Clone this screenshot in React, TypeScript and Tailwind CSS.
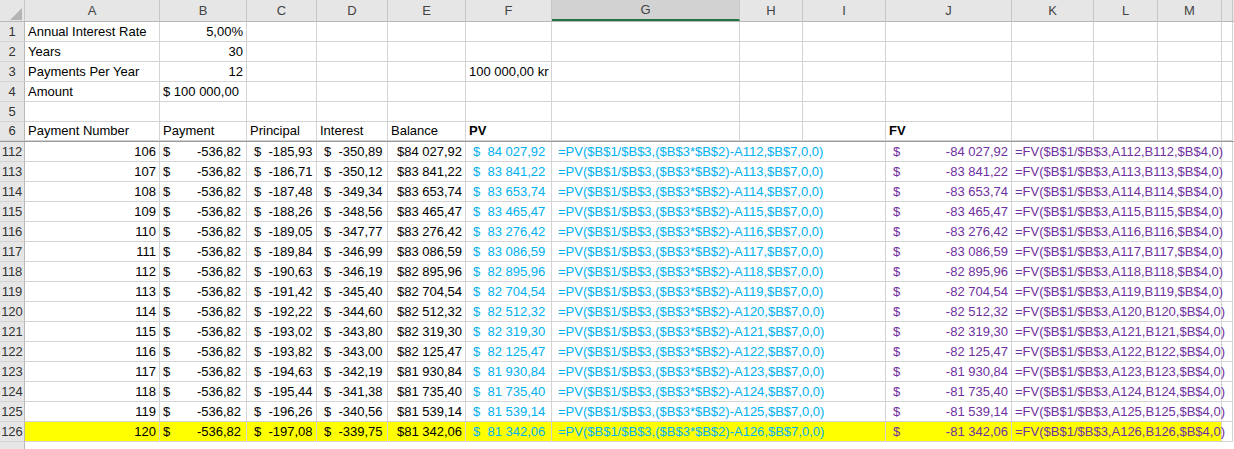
import React from "react";

const W = [25, 135, 87, 70, 71, 78, 86, 188, 63, 83, 126, 82, 64, 64, 11];
const COLS = ["", "A", "B", "C", "D", "E", "F", "G", "H", "I", "J", "K", "L", "M", ""];
const prin = ["-185,93","-186,71","-187,48","-188,26","-189,05","-189,84","-190,63","-191,42","-192,22","-193,02","-193,82","-194,63","-195,44","-196,26","-197,08"];
const intr = ["-350,89","-350,12","-349,34","-348,56","-347,77","-346,99","-346,19","-345,40","-344,60","-343,80","-343,00","-342,19","-341,38","-340,56","-339,75"];
const bal = ["84 027,92","83 841,22","83 653,74","83 465,47","83 276,42","83 086,59","82 895,96","82 704,54","82 512,32","82 319,30","82 125,47","81 930,84","81 735,40","81 539,14","81 342,06"];

const cell = "h-full shrink-0 border-r border-b border-[#d4d4d4] flex items-center px-[3px] overflow-visible whitespace-nowrap";

function RowHead({ n }: { n: string }) {
  return (
    <div style={{ width: W[0] }} className="h-full shrink-0 bg-[#e6e6e6] border-r border-b border-b-[#d4d4d4] border-r-[#b8b8b8] flex items-center justify-center text-[#333]">
      {n}
    </div>
  );
}

function TopRow({ n, vals, bottom }: { n: number; vals: Record<number, React.ReactNode>; bottom?: boolean }) {
  return (
    <div className={`flex h-[20px] ${bottom ? "border-b border-[#9b9b9b]" : ""}`}>
      <RowHead n={String(n)} />
      {W.slice(1).map((w, i) => (
        <div key={i} style={{ width: w }} className={cell}>
          {vals[i + 1]}
        </div>
      ))}
    </div>
  );
}

function Money({ v, cls = "" }: { v: string; cls?: string }) {
  return (
    <div className={`flex w-full justify-between ${cls}`}>
      <span>$</span>
      <span>{v}</span>
    </div>
  );
}

export default function App() {
  return (
    <div className="w-[1234px] h-[449px] overflow-hidden bg-white text-[13px] text-black" style={{ fontFamily: '"Liberation Sans", Arial, sans-serif' }}>
      <div className="flex h-[22px] bg-[#e6e6e6] border-b border-[#b8b8b8]">
        {COLS.map((c, i) => (
          <div key={i} style={{ width: W[i] }} className={`h-full shrink-0 border-r border-[#c8c8c8] flex items-center justify-center text-[#444] ${c === "G" ? "bg-[#d2d2d2] border-b-2 border-b-[#217346]" : ""}`}>
            {i === 0 ? <svg width="12" height="12" className="ml-[8px] mt-[6px]"><polygon points="12,0 12,12 0,12" fill="#b4b4b4" /></svg> : c}
          </div>
        ))}
      </div>
      <TopRow n={1} vals={{ 1: "Annual Interest Rate", 2: <span className="w-full text-right">5,00%</span> }} />
      <TopRow n={2} vals={{ 1: "Years", 2: <span className="w-full text-right">30</span> }} />
      <TopRow n={3} vals={{ 1: "Payments Per Year", 2: <span className="w-full text-right">12</span>, 6: <span className="w-full text-right">100 000,00 kr</span> }} />
      <TopRow n={4} vals={{ 1: "Amount", 2: <span className="w-full text-right pr-[20px]">$ 100 000,00</span> }} />
      <TopRow n={5} vals={{}} />
      <TopRow n={6} bottom vals={{ 1: "Payment Number", 2: "Payment", 3: "Principal", 4: "Interest", 5: "Balance", 6: <b>PV</b>, 10: <b>FV</b> }} />
      {bal.map((b, i) => {
        const r = 112 + i;
        const y = i === 14;
        const bg = y ? "bg-[#ffff00]" : "";
        return (
          <div key={r} className="flex h-[20px]">
            <RowHead n={String(r)} />
            <div style={{ width: W[1] }} className={`${cell} ${bg} justify-end`}>{106 + i}</div>
            <div style={{ width: W[2] }} className={`${cell} ${bg}`}><Money v="-536,82" cls="pr-[2px]" /></div>
            <div style={{ width: W[3] }} className={`${cell} ${bg}`}><span className="pl-[4px]">$ &nbsp;{prin[i]}</span></div>
            <div style={{ width: W[4] }} className={`${cell} ${bg}`}><span className="pl-[4px]">$ &nbsp;{intr[i]}</span></div>
            <div style={{ width: W[5] }} className={`${cell} ${bg} justify-end`}>${b}</div>
            <div style={{ width: W[6] }} className={`${cell} ${bg} text-[#00b0f0]`}><span className="pl-[4px]">$ &nbsp;{b}</span></div>
            <div style={{ width: W[7] + W[8] + W[9] }} className={`${cell} ${bg} text-[#00b0f0] pl-[6px]`}>=PV($B$1/$B$3,($B$3*$B$2)-A{r},$B$7,0,0)</div>
            <div style={{ width: W[10] }} className={`${cell} ${bg} text-[#7030a0]`}><div className="flex w-full justify-between pl-[4px]"><span>$</span><span>-{b}</span></div></div>
            <div style={{ width: W[11] + W[12] + W[13] }} className={`${cell} ${bg} text-[#7030a0]`}>=FV($B$1/$B$3,A{r},B{r},$B$4,0)</div>
            <div style={{ width: W[14] }} className={cell}></div>
          </div>
        );
      })}
      <div className="flex h-[20px]">
        <RowHead n="" />
      </div>
    </div>
  );
}
